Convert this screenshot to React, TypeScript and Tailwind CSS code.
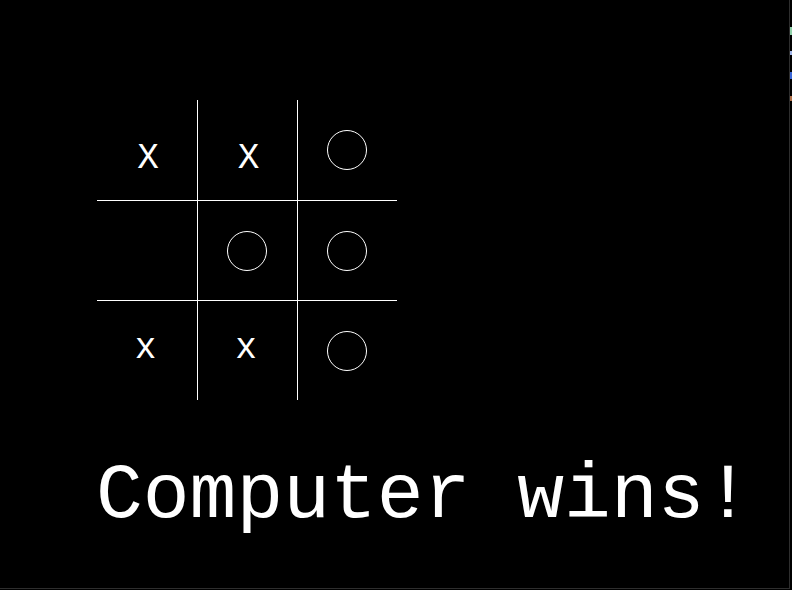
import React from "react";

type Mark = "X" | "x" | "O" | "";

const board: Mark[][] = [
  ["X", "X", "O"],
  ["", "O", "O"],
  ["x", "x", "O"],
];

function Circle() {
  return (
    <svg width="40" height="40" viewBox="0 0 40 40" className="block">
      <circle cx="20" cy="20" r="19.5" fill="none" stroke="white" strokeWidth="1" />
    </svg>
  );
}

function Cell({ mark, row, col }: { mark: Mark; row: number; col: number }) {
  const edges = `${col > 0 ? "border-l" : ""} ${row > 0 ? "border-t" : ""}`;
  if (mark === "O") {
    return (
      <div className={`flex items-center justify-center border-white pr-[2px] ${edges}`}>
        <Circle />
      </div>
    );
  }
  if (mark === "X") {
    return (
      <div className={`flex justify-center border-white pt-[41px] pl-[2px] ${edges}`}>
        <span className="text-[36px] leading-none text-white">X</span>
      </div>
    );
  }
  if (mark === "x") {
    return (
      <div className={`flex justify-center border-white pt-[30px] pr-[3px] ${edges}`}>
        <span className="text-[36px] leading-none text-white">x</span>
      </div>
    );
  }
  return <div className={`border-white ${edges}`} />;
}

export default function App() {
  return (
    <div className="flex w-[792px] h-[590px] bg-black overflow-hidden font-['Courier_New','Nimbus_Mono_PS','FreeMono','Courier','Liberation_Mono',monospace]">
      <div className="w-[790px] h-[589px] border-r border-b border-[#2e2e2e] pt-[100px] pl-[97px]">
        <div className="grid grid-cols-[100px_100px_100px] grid-rows-[100px_100px_100px] w-[300px]">
          {board.map((r, i) => r.map((m, j) => <Cell key={`${i}-${j}`} mark={m} row={i} col={j} />))}
        </div>
        <div className="mt-[57px] -ml-[1px] text-[78px] leading-none text-white whitespace-pre">
          Computer wins!
        </div>
      </div>
      <div className="flex flex-col w-[2px]">
        <div className="h-[27px]" />
        <div className="h-[8px] bg-[#8fd0a8]" />
        <div className="h-[16px]" />
        <div className="h-[4px] bg-[#9fb4e8]" />
        <div className="h-[17px]" />
        <div className="h-[7px] bg-[#3b66d6]" />
        <div className="h-[17px]" />
        <div className="h-[5px] bg-[#b0704a]" />
      </div>
    </div>
  );
}
